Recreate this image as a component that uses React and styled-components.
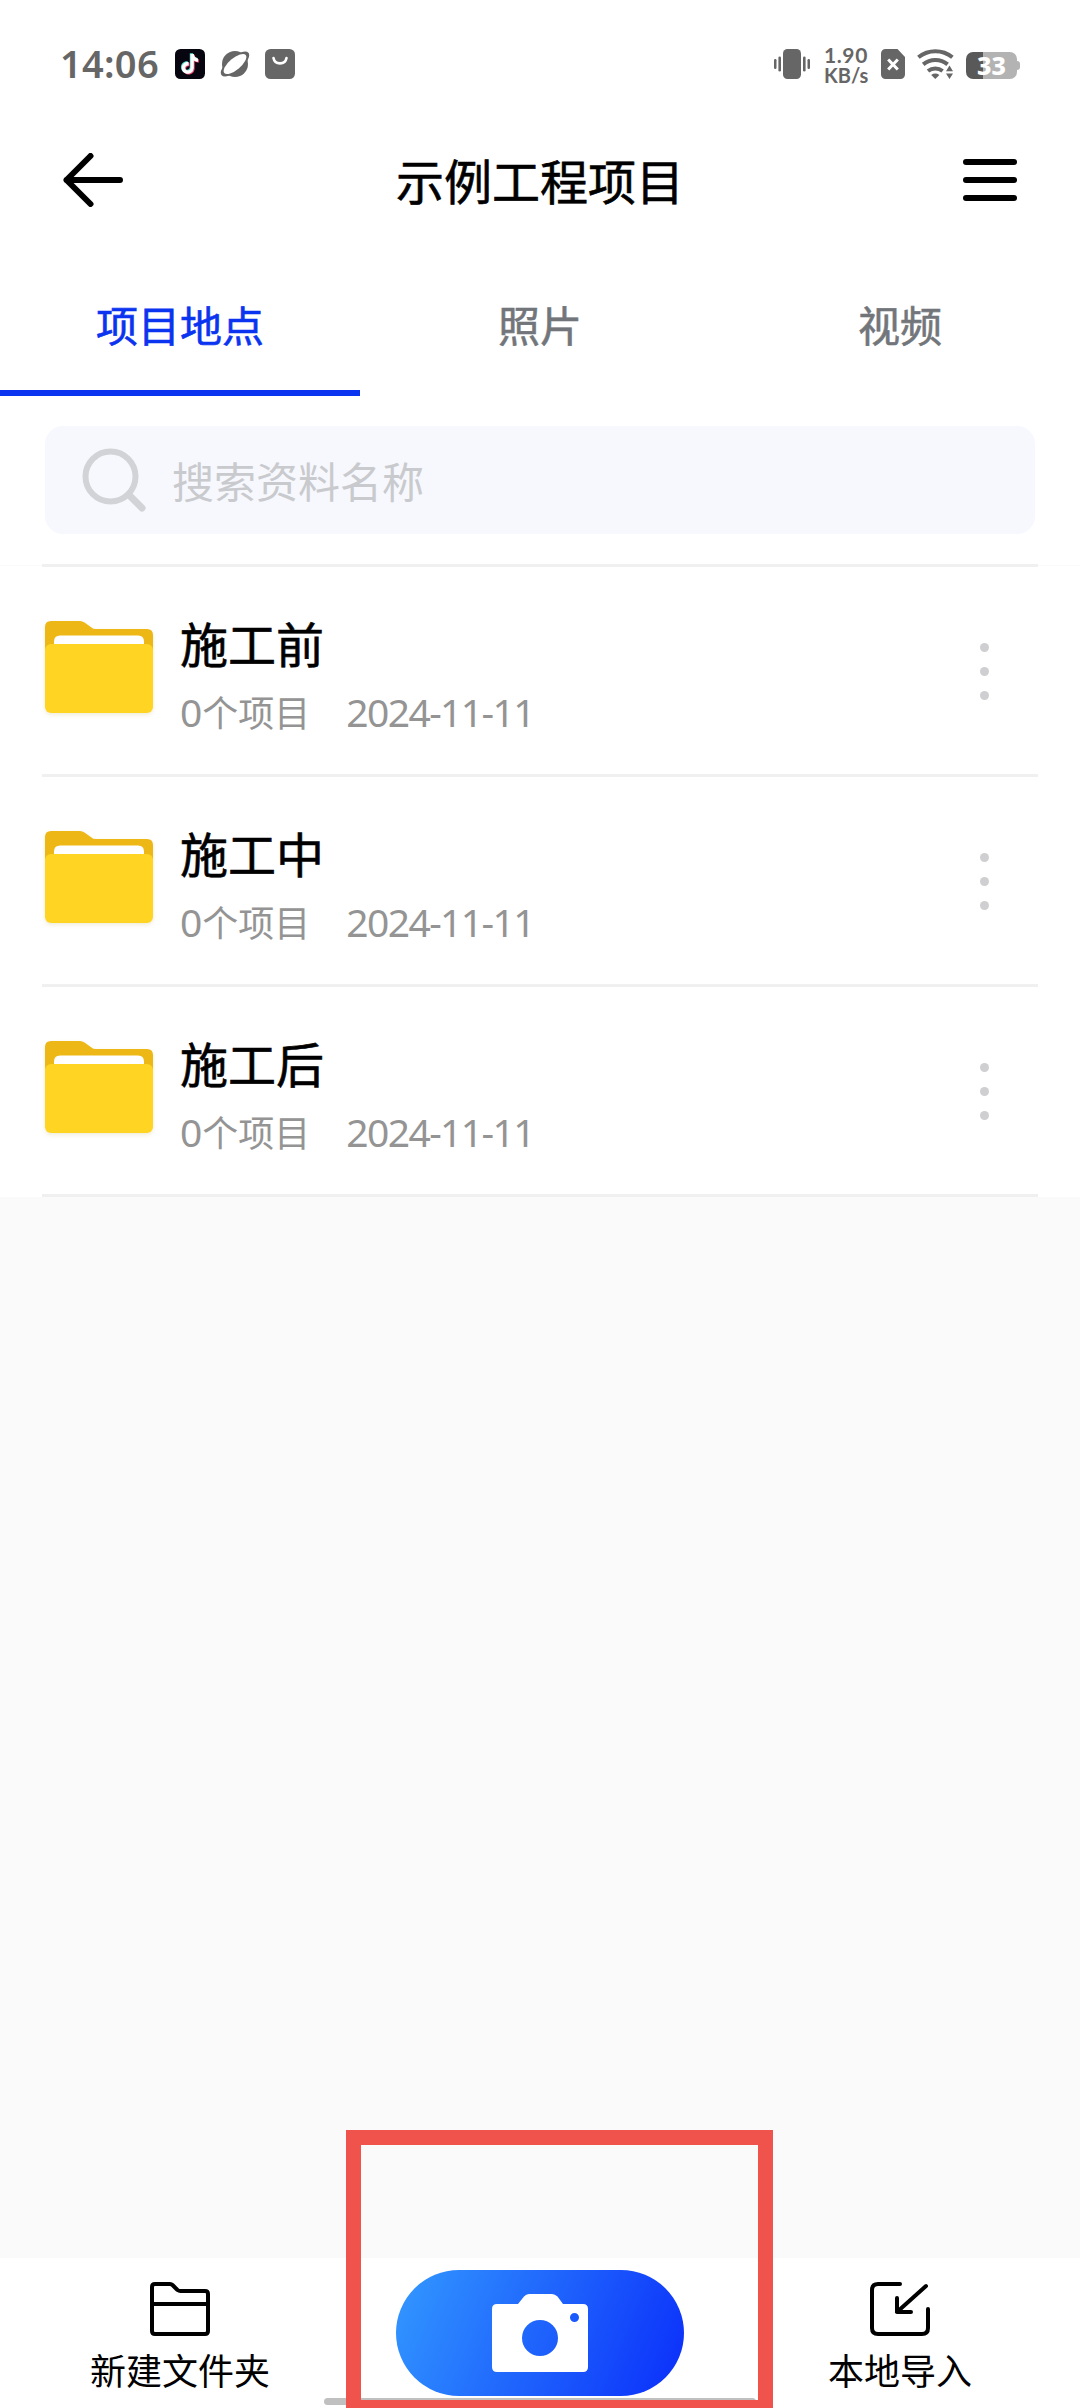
import React from 'react';
import styled, {createGlobalStyle} from 'styled-components';


const GlobalStyle = createGlobalStyle`
    * {
        box-sizing: border-box;
    }

    body {
        margin: 0;
        background: #fafafa;
        font-family: "Noto Sans CJK SC", sans-serif;
    }

    button {
        border: 0;
        padding: 0;
        background: none;
        font: inherit;
        color: inherit;
    }

    svg {
        display: block;
    }
`;

const Screen = styled.div`
    position: relative;
    display: flex;
    flex-direction: column;
    width: 1080px;
    height: 2408px;
    overflow: hidden;
    background: #fafafa;
`;

const StatusBar = styled.div`
    display: flex;
    justify-content: space-between;
    height: 120px;
    padding: 49px 60px 0 60px;
    background: #fff;
    color: #666;
    font-family: "Noto Sans", sans-serif;
`;

const StatusGroup = styled.div`
    display: flex;
    align-items: flex-start;
    height: 30px;
    gap: ${props => props.$gap}px;
`;

const Time = styled.span`
    width: 100px;
    margin-top: -1px;
    font-size: 38px;
    font-weight: 600;
    line-height: 30px;
    letter-spacing: 0.3px;
`;

const Speed = styled.div`
    display: flex;
    flex-direction: column;
    width: 47px;
    margin-top: -4px;
    padding-left: 2px;
    font-family: Lato, sans-serif;
    font-size: 20px;
    font-weight: 700;
    line-height: 20px;
    white-space: nowrap;
`;

const SpeedValue = styled.span`
    font-size: 21px;
    letter-spacing: 0.6px;
`;

const Battery = styled.div`
    display: flex;
    align-items: center;
    height: 27px;
    margin-top: 3px;
`;

const BatteryBody = styled.div`
    width: 51px;
    height: 27px;
    border-radius: 7px;
    background: linear-gradient(to right, #595959 33%, #b3b3b3 33%);
    color: #fff;
    font-size: 25px;
    font-weight: 800;
    line-height: 26px;
    text-align: center;
`;

const BatteryTip = styled.div`
    width: 3px;
    height: 9px;
    border-radius: 0 3px 3px 0;
    background: #b3b3b3;
`;

const Header = styled.header`
    display: flex;
    align-items: center;
    justify-content: space-between;
    height: 120px;
    padding: 0 63px;
    background: #fff;
`;

const Title = styled.h1`
    margin: -2px 0 0 0;
    padding-right: 6px;
    font-size: 48px;
    font-weight: 400;
    line-height: 60px;
    color: #000;
    -webkit-text-stroke: 0.6px #000;
`;

const Tabs = styled.nav`
    display: grid;
    grid-template-columns: repeat(3, 1fr);
    height: 156px;
    background: #fff;
`;

const Tab = styled.button`
    border-bottom: 6px solid ${props => props.$active ? '#0b34f0' : 'transparent'};
    padding-top: 17px;
    font-size: 42px;
    font-weight: 400;
    line-height: 60px;
    color: ${props => props.$active ? '#0b34f0' : '#72767b'};
    -webkit-text-stroke: 0.6px;
`;

const SearchWrap = styled.div`
    height: 169px;
    padding: 30px 45px;
    background: #fff;
`;

const SearchBox = styled.div`
    display: flex;
    align-items: center;
    gap: 25px;
    height: 108px;
    padding: 0 37px;
    border-radius: 18px;
    background: #f7f8fd;
    color: #c9cacd;
    font-size: 42px;
    line-height: 60px;
`;

const List = styled.div`
    margin-top: 1px;
    background: #fff;
`;

const Line = styled.div`
    height: 3px;
    margin: ${props => props.$first ? '-2px' : '0'} 42px 0 42px;
    background: #f0f0f0;
`;

const Row = styled.div`
    display: flex;
    align-items: flex-start;
    height: 207px;
    padding: 0 91px 0 39px;
`;

const RowFolder = styled.div`
    margin-top: 48px;
`;

const RowText = styled.div`
    flex: 1;
    margin: 45px 0 0 21px;
`;

const Name = styled.div`
    font-size: 48px;
    font-weight: 400;
    line-height: 60px;
    color: #000;
    -webkit-text-stroke: 0.6px #000;
`;

const Meta = styled.div`
    display: flex;
    align-items: baseline;
    margin-top: 15px;
    font-size: 36px;
    line-height: 48px;
    color: #949494;
`;

const Digits = styled.span`
    font-family: "Noto Sans", sans-serif;
    font-size: 39px;
    line-height: 48px;
    letter-spacing: ${props => props.$spacing}px;
`;

const DateText = styled(Digits)`
    margin-left: 36px;
`;

const More = styled.button`
    display: flex;
    flex-direction: column;
    gap: 15px;
    margin-top: 76px;
`;

const Dot = styled.span`
    width: 9px;
    height: 9px;
    border-radius: 50%;
    background: #cfcfd1;
`;

const BottomBar = styled.footer`
    display: grid;
    grid-template-columns: repeat(3, 1fr);
    height: 150px;
    margin-top: auto;
    background: #fff;
`;

const Action = styled.button`
    display: flex;
    flex-direction: column;
    align-items: center;
    padding-top: 24px;
    font-size: 36px;
    line-height: 48px;
    color: #000;
`;

const ActionLabel = styled.span`
    margin-top: 9px;
`;

const Shoot = styled.button`
    display: flex;
    align-items: center;
    justify-content: center;
    align-self: center;
    justify-self: center;
    width: 288px;
    height: 126px;
    border-radius: 63px;
    background: linear-gradient(113deg, #3399ff, #0a2dfa);
`;

const HomeBar = styled.div`
    position: absolute;
    left: 324px;
    bottom: 3px;
    width: 432px;
    height: 7px;
    border-radius: 4px;
    background: #c0c0c0;
`;

// red frame that points at the camera button
const Highlight = styled.div`
    position: absolute;
    left: 346px;
    bottom: -7px;
    width: 427px;
    height: 285px;
    border: 15px solid #f0524c;
`;

const folders = [
    {name: '施工前', count: 0, date: '2024-11-11'},
    {name: '施工中', count: 0, date: '2024-11-11'},
    {name: '施工后', count: 0, date: '2024-11-11'},
];

function NoteIcon() {
    const note = 'M15.6 5h3.2c.2 2.6 1.8 4.2 4.2 4.5v3.3c-1.6 0-3-.5-4.2-1.3v6.9c0 3.8-2.6 6.3-6 6.3s-6-2.5-6-5.8c0-3.6 3-6.2 6.8-5.8v3.4c-1.9-.4-3.4.7-3.4 2.4 0 1.5 1.1 2.5 2.5 2.5 1.7 0 2.9-1.1 2.9-3z';
    return (
        <svg width="30" height="30" viewBox="0 0 30 30">
            <rect width="30" height="30" rx="5.5" fill="#070510" />
            <path d={note} fill="#5fe3dd" transform="translate(-.8 -.7)" />
            <path d={note} fill="#e8436c" transform="translate(.9 .8)" />
            <path d={note} fill="#fff" />
        </svg>
    );
}

function PlanetIcon() {
    return (
        <svg width="30" height="30" viewBox="0 0 30 30">
            <circle cx="15" cy="15" r="13" fill="#666" />
            <ellipse cx="15" cy="15" rx="17.5" ry="7.2" fill="#666" transform="rotate(-40 15 15)" />
            <ellipse cx="15" cy="15" rx="14" ry="5.8" fill="#fff" transform="rotate(-40 15 15)" />
        </svg>
    );
}

function BagIcon() {
    return (
        <svg width="30" height="30" viewBox="0 0 30 30">
            <rect width="30" height="30" rx="5.5" fill="#666" />
            <path d="M8.5 9c.6 3.4 3 5.400 6.500 5.400S20.900 12.400 21.500 9" fill="none" stroke="#fff" strokeWidth="2.6" strokeLinecap="round" />
        </svg>
    );
}

function VibrateIcon() {
    return (
        <svg width="36" height="30" viewBox="0 0 36 30" fill="#666">
            <rect x="9" width="18" height="30" rx="4.5" />
            <rect x="0" y="10" width="2.5" height="10" rx="1.2" />
            <rect x="4.4" y="7.5" width="2.6" height="15" rx="1.3" />
            <rect x="29" y="7.5" width="2.6" height="15" rx="1.3" />
            <rect x="33.5" y="10" width="2.5" height="10" rx="1.2" />
        </svg>
    );
}

function SimIcon() {
    return (
        <svg width="24" height="30" viewBox="0 0 24 30">
            <path d="M4.5 0H16.5L24 8V25.5A4.5 4.5 0 0 1 19.5 30H4.5A4.5 4.5 0 0 1 0 25.5V4.5A4.5 4.5 0 0 1 4.5 0Z" fill="#666" />
            <path d="M7.2 10.5L16.8 20.5M16.8 10.5L7.2 20.5" stroke="#fff" strokeWidth="3" />
        </svg>
    );
}

function WifiIcon() {
    return (
        <svg width="37" height="30" viewBox="0 0 37 30">
            <g fill="none" stroke="#666" strokeWidth="4">
                <path d="M1.400 8.200A27 27 0 0 1 35.400 8.200" />
                <path d="M6.200 15.400A19 19 0 0 1 30.600 15.400" />
                <path d="M11 22A12 12 0 0 1 25.600 22" />
            </g>
            <path d="M14.200 26A7 7 0 0 1 22.400 26L18.300 30Z" fill="#666" />
            <path d="M32.500 14.500L37 20V30H27V23Z" fill="#fff" />
            <path d="M32.500 16.500L36 22.200H29ZM32.500 30L36 24.600H29Z" fill="#666" />
        </svg>
    );
}

function BackIcon() {
    return (
        <svg width="60" height="54" viewBox="0 0 60 54" fill="none" stroke="#000" strokeWidth="6" strokeLinecap="round" strokeLinejoin="round">
            <path d="M27.5 3L3.5 27L27.5 51M3.5 27H57" />
        </svg>
    );
}

function MenuIcon() {
    return (
        <svg width="54" height="42" viewBox="0 0 54 42" fill="#000">
            <rect width="54" height="6" rx="3" />
            <rect y="18" width="54" height="6" rx="3" />
            <rect y="36" width="54" height="6" rx="3" />
        </svg>
    );
}

function SearchIcon() {
    return (
        <svg width="65" height="66" viewBox="0 0 65 66" fill="none" stroke="#d2d3d6" strokeLinecap="round">
            <circle cx="28.5" cy="29.5" r="25" strokeWidth="6" />
            <path d="M48 49L60 61" strokeWidth="7" />
        </svg>
    );
}

function FolderIcon() {
    return (
        <svg width="120" height="108" viewBox="0 0 120 108">
            <defs>
                <filter id="folderShadow" x="-10%" y="-10%" width="120%" height="130%">
                    <feDropShadow dx="0" dy="2" stdDeviation="2" floodColor="#d8c98a" floodOpacity=".35" />
                </filter>
            </defs>
            <g filter="url(#folderShadow)">
                <path d="M12 6H41Q43.5 6 45.5 7.5L52.5 12.5Q54 14 57 14H108Q114 14 114 20V60H6V12Q6 6 12 6Z" fill="#edb813" />
                <path d="M21 20.5H99Q105 20.5 105 26.5V40H15V26.5Q15 20.5 21 20.5Z" fill="#fff" />
                <rect x="6" y="29" width="108" height="69" rx="6" fill="#ffd424" />
            </g>
        </svg>
    );
}

function NewFolderIcon() {
    return (
        <svg width="60" height="54" viewBox="0 0 60 54" fill="none" stroke="#000" strokeWidth="4" strokeLinejoin="round">
            <path d="M5 2H20Q21.5 2 22.5 3L27.5 8Q28.8 9 30.5 9H55Q58 9 58 12V49Q58 52 55 52H5Q2 52 2 49V5Q2 2 5 2Z" />
            <path d="M2 22H58" />
        </svg>
    );
}

function ImportIcon() {
    return (
        <svg width="60" height="54" viewBox="0 0 60 54" fill="none" stroke="#000" strokeWidth="4" strokeLinecap="round" strokeLinejoin="round">
            <path d="M30 2H8Q2 2 2 8V46Q2 52 8 52H52Q58 52 58 46V27" />
            <path d="M56 4L27 30M27 16V30H41" />
        </svg>
    );
}

function CameraIcon() {
    return (
        <svg width="96" height="78" viewBox="0 0 96 78">
            <path
                fillRule="evenodd"
                fill="#fff"
                d="M5 10H26L32 2.5Q34 0 37 0H60Q63 0 65.5 2.5L71 10H91Q96 10 96 15V73Q96 78 91 78H5Q0 78 0 73V15Q0 10 5 10ZM48 26A18 18 0 1 0 48 62A18 18 0 1 0 48 26ZM82.5 19A4.5 4.5 0 1 0 82.5 28A4.5 4.5 0 1 0 82.5 19Z"
            />
        </svg>
    );
}

function FolderRow({folder}) {
    return (
        <>
            <Row>
                <RowFolder><FolderIcon /></RowFolder>
                <RowText>
                    <Name>{folder.name}</Name>
                    <Meta>
                        <Digits $spacing={0}>{folder.count}</Digits>个项目
                        <DateText $spacing={-1.6}>{folder.date}</DateText>
                    </Meta>
                </RowText>
                <More>
                    <Dot />
                    <Dot />
                    <Dot />
                </More>
            </Row>
            <Line />
        </>
    );
}

function App() {
    return (
        <>
            <GlobalStyle />
            <Screen>
                <StatusBar>
                    <StatusGroup $gap={15}>
                        <Time>14:06</Time>
                        <NoteIcon />
                        <PlanetIcon />
                        <BagIcon />
                    </StatusGroup>
                    <StatusGroup $gap={12}>
                        <VibrateIcon />
                        <Speed>
                            <SpeedValue>1.90</SpeedValue>
                            <span>KB/s</span>
                        </Speed>
                        <SimIcon />
                        <WifiIcon />
                        <Battery>
                            <BatteryBody>33</BatteryBody>
                            <BatteryTip />
                        </Battery>
                    </StatusGroup>
                </StatusBar>
                <Header>
                    <BackIcon />
                    <Title>示例工程项目</Title>
                    <MenuIcon />
                </Header>
                <Tabs>
                    <Tab $active>项目地点</Tab>
                    <Tab>照片</Tab>
                    <Tab>视频</Tab>
                </Tabs>
                <SearchWrap>
                    <SearchBox>
                        <SearchIcon />
                        <span>搜索资料名称</span>
                    </SearchBox>
                </SearchWrap>
                <List>
                    <Line $first />
                    {folders.map(folder => <FolderRow key={folder.name} folder={folder} />)}
                </List>
                <BottomBar>
                    <Action>
                        <NewFolderIcon />
                        <ActionLabel>新建文件夹</ActionLabel>
                    </Action>
                    <Shoot><CameraIcon /></Shoot>
                    <Action>
                        <ImportIcon />
                        <ActionLabel>本地导入</ActionLabel>
                    </Action>
                </BottomBar>
                <HomeBar />
                <Highlight />
            </Screen>
        </>
    );
}

export default App;
